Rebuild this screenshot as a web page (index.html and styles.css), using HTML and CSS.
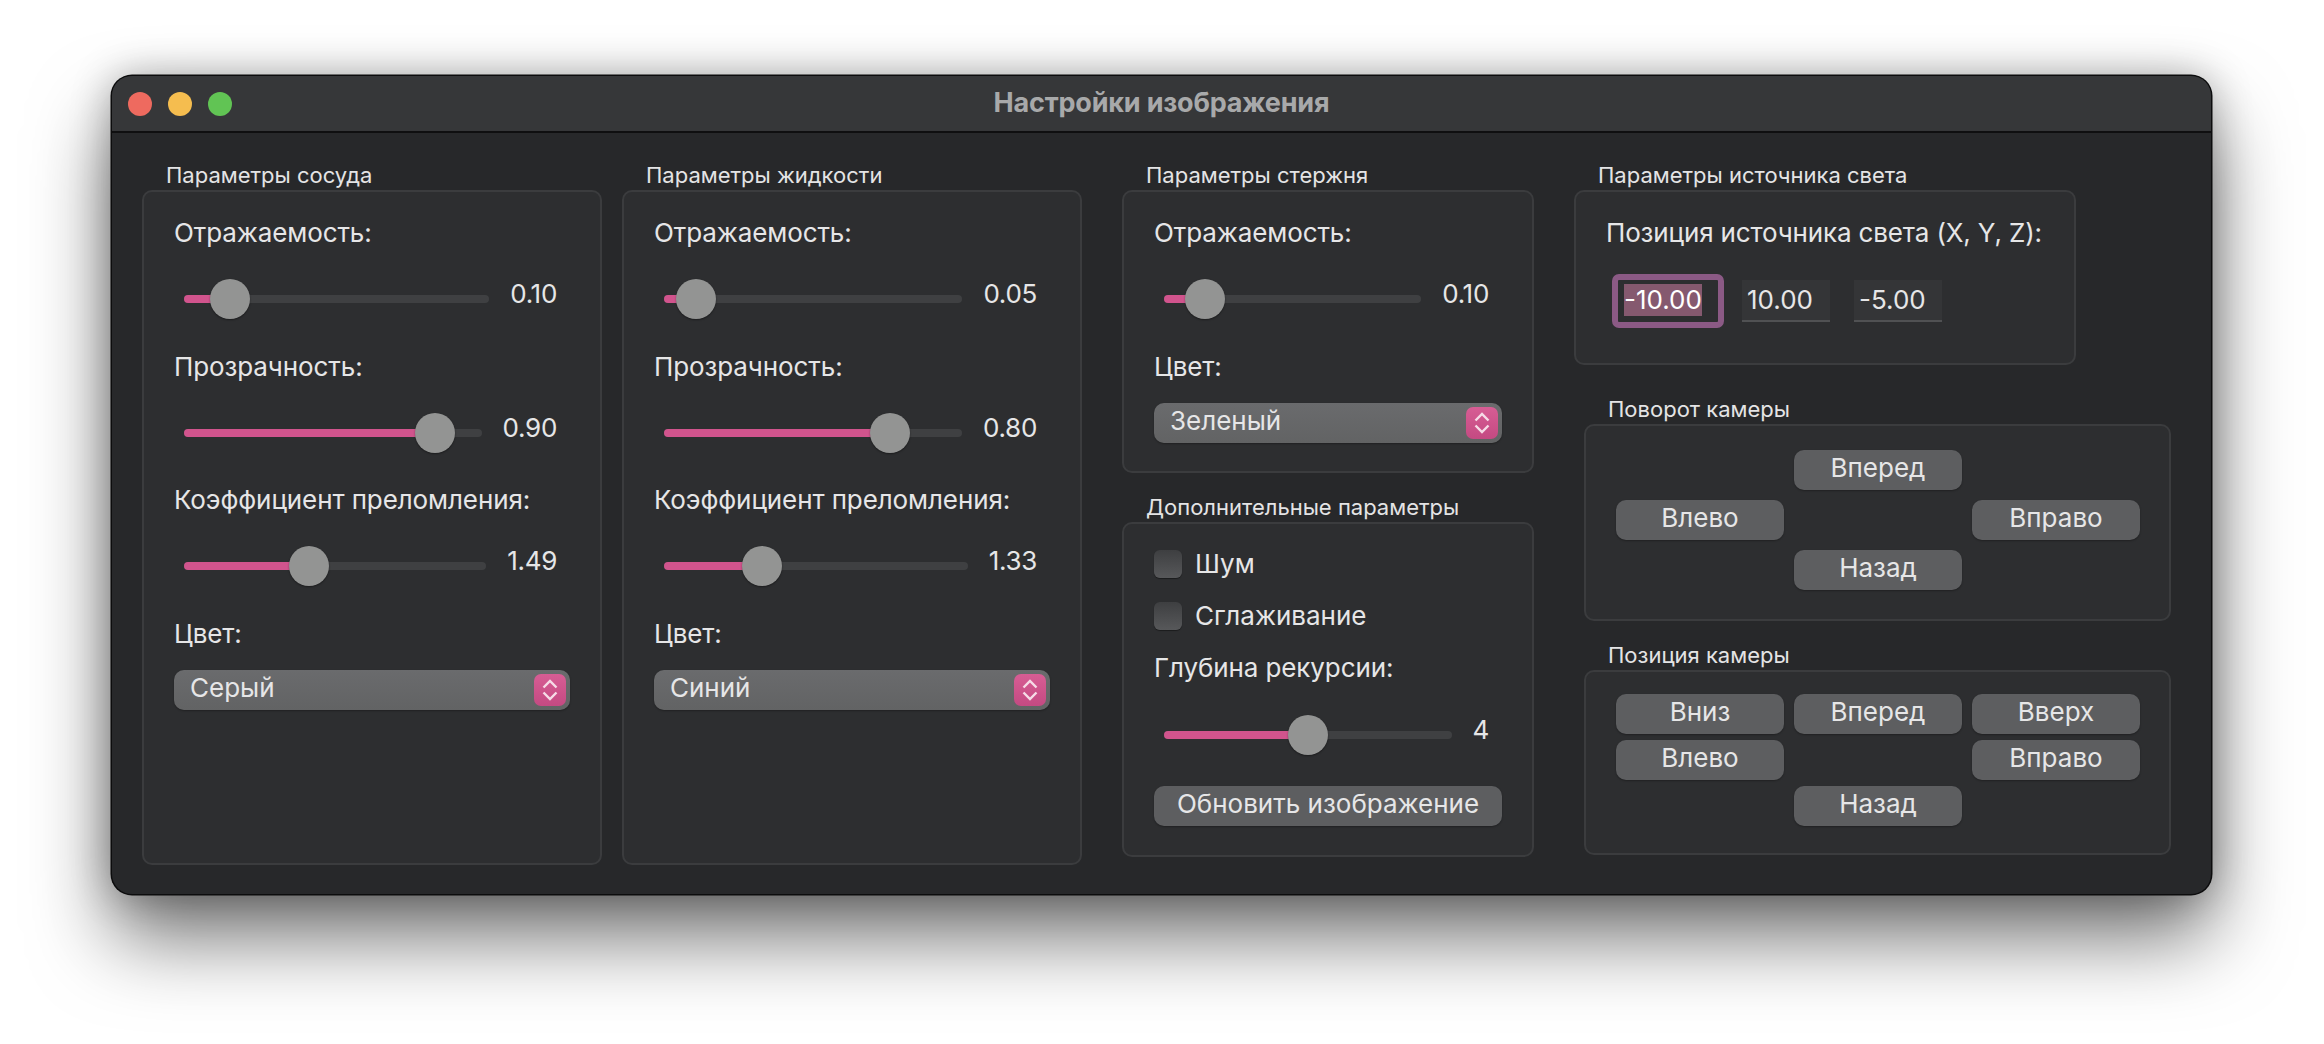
FILE: index.html
```html
<!DOCTYPE html>
<html lang="ru">
<head>
<meta charset="utf-8">
<title>Настройки изображения</title>
<link rel="stylesheet" href="styles.css">
</head>
<body>
<div class="window">
  <header class="titlebar">
    <div class="lights"><span class="light red"></span><span class="light yellow"></span><span class="light green"></span></div>
    <div class="wintitle">Настройки изображения</div>
  </header>
  <main class="content">
    <div class="pair">
      <section class="col wide">
        <h2 class="gtitle">Параметры сосуда</h2>
        <div class="group tall">
          <div class="field"><div class="label">Отражаемость:</div><div class="slider"><div class="track"><div class="fill" style="width:15.1%"><span class="knob"></span></div></div><span class="val">0.10</span></div></div>
          <div class="field"><div class="label">Прозрачность:</div><div class="slider"><div class="track"><div class="fill" style="width:84.3%"><span class="knob"></span></div></div><span class="val">0.90</span></div></div>
          <div class="field"><div class="label">Коэффициент преломления:</div><div class="slider"><div class="track"><div class="fill" style="width:41.4%"><span class="knob"></span></div></div><span class="val">1.49</span></div></div>
          <div class="label">Цвет:</div>
          <div class="select"><span>Серый</span><span class="stepper"><svg width="16" height="24" viewBox="0 0 16 24"><path d="M1.5 9.5L8 3l6.5 6.5M1.5 14.5L8 21l6.5-6.5"/></svg></span></div>
        </div>
      </section>
      <section class="col wide">
        <h2 class="gtitle">Параметры жидкости</h2>
        <div class="group tall">
          <div class="field"><div class="label">Отражаемость:</div><div class="slider"><div class="track"><div class="fill" style="width:10.6%"><span class="knob"></span></div></div><span class="val">0.05</span></div></div>
          <div class="field"><div class="label">Прозрачность:</div><div class="slider"><div class="track"><div class="fill" style="width:75.7%"><span class="knob"></span></div></div><span class="val">0.80</span></div></div>
          <div class="field"><div class="label">Коэффициент преломления:</div><div class="slider"><div class="track"><div class="fill" style="width:32.2%"><span class="knob"></span></div></div><span class="val">1.33</span></div></div>
          <div class="label">Цвет:</div>
          <div class="select"><span>Синий</span><span class="stepper"><svg width="16" height="24" viewBox="0 0 16 24"><path d="M1.5 9.5L8 3l6.5 6.5M1.5 14.5L8 21l6.5-6.5"/></svg></span></div>
        </div>
      </section>
    </div>
    <div class="col mid">
      <section>
        <h2 class="gtitle">Параметры стержня</h2>
        <div class="group rod">
          <div class="field"><div class="label">Отражаемость:</div><div class="slider"><div class="track"><div class="fill" style="width:16%"><span class="knob"></span></div></div><span class="val">0.10</span></div></div>
          <div class="label">Цвет:</div>
          <div class="select"><span>Зеленый</span><span class="stepper"><svg width="16" height="24" viewBox="0 0 16 24"><path d="M1.5 9.5L8 3l6.5 6.5M1.5 14.5L8 21l6.5-6.5"/></svg></span></div>
        </div>
      </section>
      <section>
        <h2 class="gtitle">Дополнительные параметры</h2>
        <div class="group extra">
          <label class="check"><span class="box"></span><span class="ctext">Шум</span></label>
          <label class="check"><span class="box"></span><span class="ctext">Сглаживание</span></label>
          <div class="label depth">Глубина рекурсии:</div>
          <div class="slider depth-slider"><div class="track"><div class="fill" style="width:50%"><span class="knob"></span></div></div><span class="val">4</span></div>
          <div class="btn update">Обновить изображение</div>
        </div>
      </section>
    </div>
    <div class="col last">
      <section>
        <h2 class="gtitle">Параметры источника света</h2>
        <div class="group light-src">
          <div class="label src-label">Позиция источника света (X, Y, Z):</div>
          <div class="inputs">
            <div class="input focused"><span class="sel">-10.00</span></div>
            <div class="input">10.00</div>
            <div class="input">-5.00</div>
          </div>
        </div>
      </section>
      <div class="cams">
        <section>
          <h2 class="gtitle">Поворот камеры</h2>
          <div class="group rot">
            <div class="btn c2">Вперед</div>
            <div class="btn c1">Влево</div>
            <div class="btn c3">Вправо</div>
            <div class="btn c2">Назад</div>
          </div>
        </section>
        <section>
          <h2 class="gtitle">Позиция камеры</h2>
          <div class="group pos">
            <div class="btn">Вниз</div>
            <div class="btn">Вперед</div>
            <div class="btn">Вверх</div>
            <div class="btn c1">Влево</div>
            <div class="btn c3">Вправо</div>
            <div class="btn c2">Назад</div>
          </div>
        </section>
      </div>
    </div>
  </main>
</div>
</body>
</html>
```
FILE: styles.css
```css
* { box-sizing: border-box; }
html, body { margin: 0; height: 100%; }
body {
  background: #fff;
  padding: 76px 0 0 112px;
  overflow: hidden;
  font-family: Inter, "Noto Sans", "Liberation Sans", sans-serif;
  color: #e6e6e7;
}
.window {
  width: 2099px;
  height: 818px;
  background: #27282a;
  border-radius: 20px;
  box-shadow: 0 0 0 1.5px #0c0c0d, 0 44px 80px rgba(0,0,0,.55), 0 0 40px rgba(0,0,0,.3);
  display: flex;
  flex-direction: column;
  overflow: hidden;
}
.titlebar {
  height: 57px;
  flex: none;
  background: #363739;
  border-bottom: 2px solid #0f0f10;
  display: flex;
  align-items: center;
  position: relative;
  padding-left: 16px;
}
.lights { display: flex; gap: 16px; }
.light { width: 24px; height: 24px; border-radius: 50%; }
.red { background: #ee6a5f; }
.yellow { background: #f5bd4f; }
.green { background: #61c454; }
.wintitle {
  position: absolute;
  left: 0; right: 0; top: 0; bottom: 0;
  display: flex;
  align-items: center;
  justify-content: center;
  font-size: 27px;
  font-weight: 700;
  color: #a8a9aa;
  letter-spacing: -.2px;
  padding-bottom: 2px;
}
.content {
  display: flex;
  gap: 40px;
  padding: 30px 0 0 30px;
}
.pair { display: flex; gap: 20px; }
.col.wide { width: 460px; }
.col.mid { width: 412px; display: flex; flex-direction: column; gap: 22px; }
.col.last { width: 597px; display: flex; flex-direction: column; gap: 32px; }
.cams { padding-left: 10px; display: flex; flex-direction: column; gap: 22px; }
.gtitle {
  margin: 0;
  height: 27px;
  line-height: 25px;
  padding-left: 24px;
  font-size: 22px;
  font-weight: 400;
  color: #e4e4e5;
  white-space: nowrap;
}
.group {
  background: #2d2e30;
  border: 2px solid #3b3c3e;
  border-radius: 10px;
  padding: 25px 30px 0;
}
.tall { height: 675px; }
.rod { height: 283px; }
.extra { height: 335px; padding-top: 26px; }
.light-src { height: 175px; width: 502px; }
.rot, .pos {
  display: grid;
  grid-template-columns: repeat(3, 168px);
  column-gap: 10px;
  align-content: start;
}
.rot { height: 197px; row-gap: 10px; padding-top: 24px; }
.pos { height: 185px; row-gap: 6px; padding-top: 22px; }
.label { font-size: 26px; line-height: 32px; height: 32px; white-space: nowrap; letter-spacing: -.1px; }
.src-label { letter-spacing: -.15px; }
.field { height: 133.5px; }
.slider {
  display: flex;
  align-items: center;
  height: 40px;
  margin-top: 30px;
  padding: 0 13px 0 10px;
  gap: 21px;
}
.track {
  flex: 1;
  height: 8px;
  border-radius: 4px;
  background: #3f4042;
}
.fill {
  height: 100%;
  background: #d1548d;
  border-radius: 4px;
  position: relative;
}
.knob {
  position: absolute;
  right: -20px;
  top: -16px;
  width: 40px;
  height: 40px;
  border-radius: 50%;
  background: #939493;
  box-shadow: 0 1px 2px rgba(0,0,0,.4);
}
.val { font-size: 26px; line-height: 30px; padding-bottom: 10px; letter-spacing: -.3px; }
.select {
  margin-top: 20px;
  height: 40px;
  border-radius: 10px;
  background: linear-gradient(#6a6b6d, #626364);
  box-shadow: 0 1px 2px rgba(0,0,0,.3);
  display: flex;
  align-items: center;
  justify-content: space-between;
  padding: 0 4px 0 16px;
  font-size: 26px;
  line-height: 32px;
}
.select > span:first-child { padding-bottom: 4px; }
.stepper {
  width: 32px;
  height: 32px;
  border-radius: 7px;
  background: linear-gradient(#d75d94, #c44a82);
  display: flex;
  align-items: center;
  justify-content: center;
}
.stepper path { fill: none; stroke: #f6dbe7; stroke-width: 2.4; }
.check { display: flex; align-items: center; gap: 13px; height: 28px; font-size: 26px; margin-bottom: 24px; }
.ctext { padding-bottom: 2px; }
.box {
  width: 28px;
  height: 28px;
  border-radius: 6px;
  background: linear-gradient(#3e3f41, #57585a);
  box-shadow: 0 1px 1px rgba(0,0,0,.4);
}
.depth { margin-top: -2px; }
.depth-slider { margin-top: 31px; }
.btn {
  height: 40px;
  border-radius: 10px;
  background: #5d5e60;
  box-shadow: 0 1px 2px rgba(0,0,0,.3);
  text-align: center;
  font-size: 26px;
  line-height: 36px;
}
.update { margin-top: 31px; }
.c1 { grid-column: 1; }
.c2 { grid-column: 2; }
.c3 { grid-column: 3; }
.inputs { display: flex; align-items: center; gap: 24px; margin-top: 31px; padding-left: 12px; }
.input {
  width: 88px;
  height: 42px;
  background: #343537;
  border-bottom: 2px solid #505153;
  font-size: 26px;
  line-height: 40px;
  padding-left: 5px;
}
.input.focused {
  width: 100px;
  background: #2d2e30;
  border: 0;
  outline: 6px solid #8b5a85;
  border-radius: 1px;
  color: #fff;
  padding: 4px 0 0 6px;
  line-height: 32px;
}
.sel { background: #85596f; display: inline-block; height: 32px; }
```
